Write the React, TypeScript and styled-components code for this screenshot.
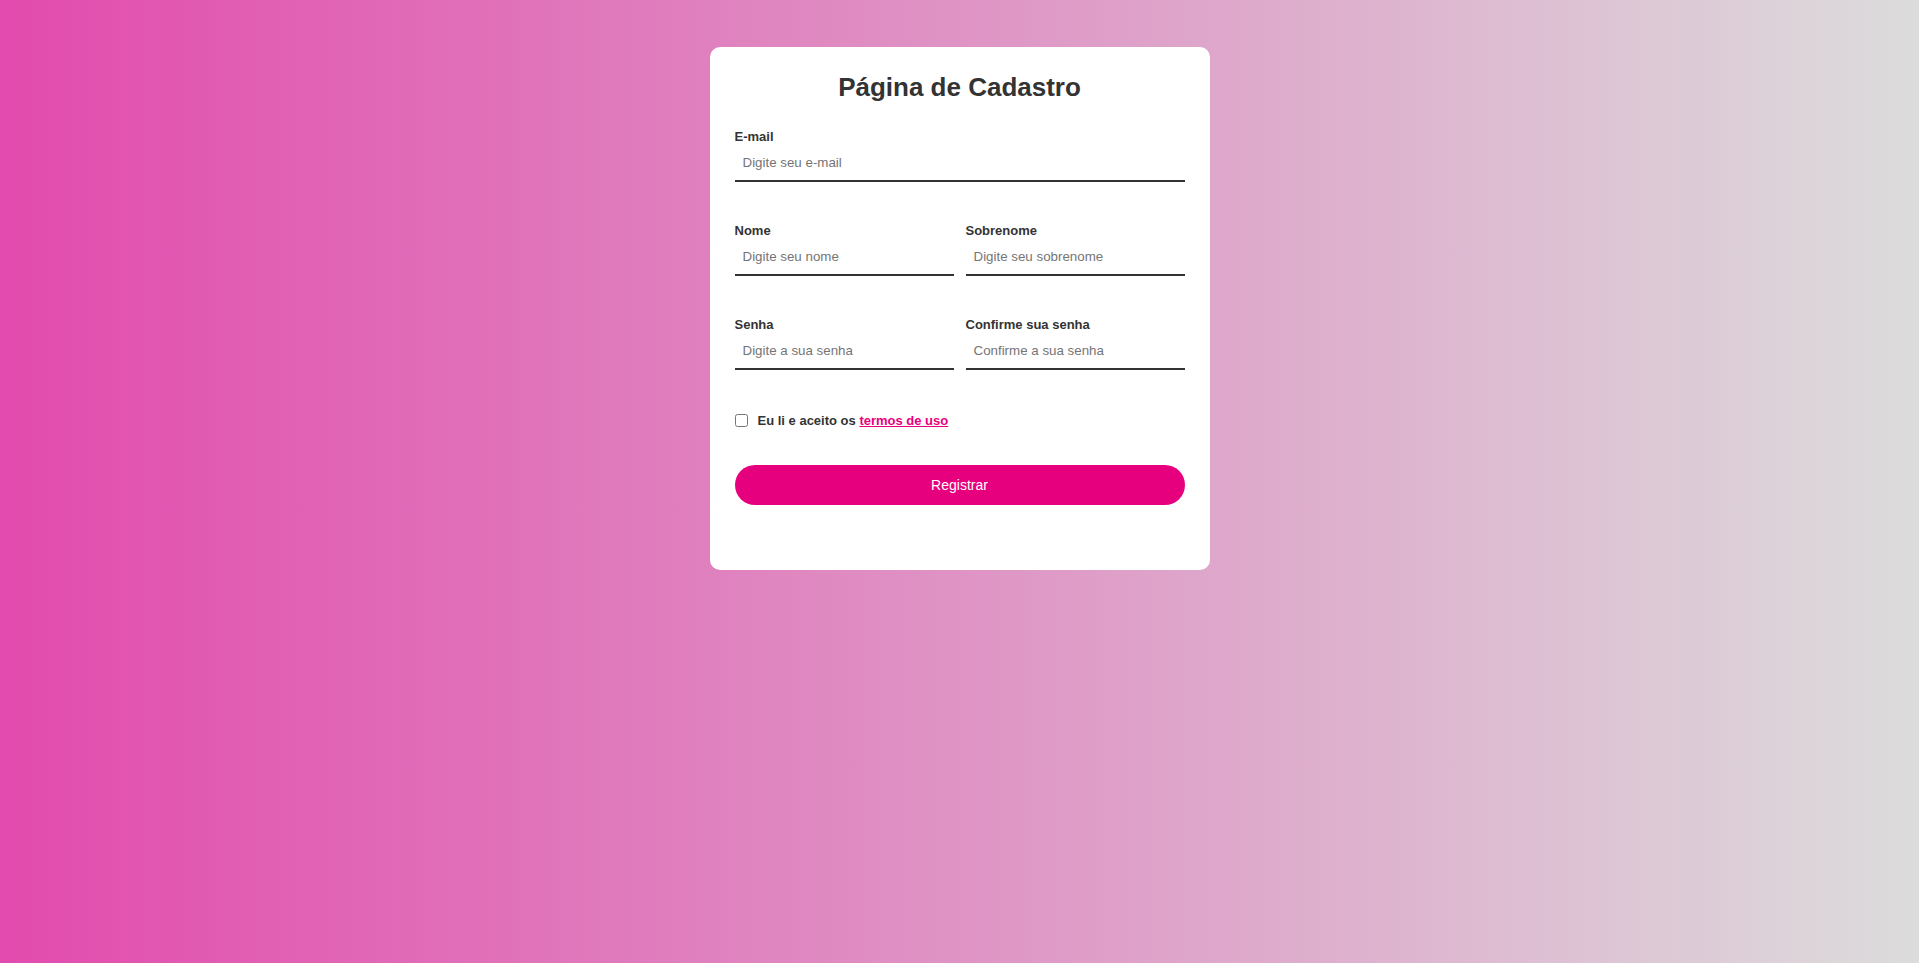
import React from "react";
import styled, { createGlobalStyle } from "styled-components";

const GlobalStyle = createGlobalStyle`
  * { box-sizing: border-box; }
  html, body { margin: 0; padding: 0; }
  body {
    font-family: "Liberation Sans", Arial, sans-serif;
    min-height: 100vh;
    background: linear-gradient(to right, #e24bad 0%, #dcdcdc 100%);
  }
`;

const Page = styled.main`
  min-height: 100vh;
  display: flex;
  justify-content: center;
  align-items: flex-start;
  padding-top: 47px;
`;

const Card = styled.form`
  width: 500px;
  background: #ffffff;
  border-radius: 10px;
  padding: 25px 25px 65px;
  display: flex;
  flex-direction: column;
`;

const Title = styled.h1`
  margin: 0 0 27px;
  text-align: center;
  font-size: 26px;
  line-height: 30px;
  font-weight: 700;
  color: #333333;
`;

const Fields = styled.div`
  display: flex;
  flex-direction: column;
  gap: 41px;
`;

const Row = styled.div<{ $cols: number }>`
  display: grid;
  grid-template-columns: repeat(${(p) => p.$cols}, 1fr);
  column-gap: 12px;
`;

const Field = styled.div`
  display: flex;
  flex-direction: column;
`;

const Label = styled.label`
  display: block;
  font-size: 13px;
  line-height: 15px;
  font-weight: 700;
  color: #333333;
  margin-bottom: 1px;
`;

const Input = styled.input`
  width: 100%;
  height: 37px;
  border: none;
  border-bottom: 2px solid #333333;
  padding: 0 8px 1px;
  font-family: "Liberation Sans", Arial, sans-serif;
  font-size: 13.333px;
  color: #333333;
  background: transparent;
  outline: none;
  &::placeholder {
    color: #757575;
  }
`;

const Terms = styled.div`
  display: flex;
  align-items: center;
  gap: 10px;
  margin: 2px 0 -4px;
  font-size: 13px;
  line-height: 15px;
  font-weight: 700;
  color: #333333;
`;

const Check = styled.input`
  margin: 0;
  width: 13px;
  height: 13px;
`;

const Link = styled.a`
  color: #e6007e;
  text-decoration: underline;
`;

const Button = styled.button`
  width: 100%;
  height: 40px;
  border: none;
  border-radius: 20px;
  background: #e6007e;
  color: #ffffff;
  font-family: "Liberation Sans", Arial, sans-serif;
  font-size: 14px;
  cursor: pointer;
`;

export default function App() {
  return (
    <>
      <GlobalStyle />
      <Page>
        <Card onSubmit={(e) => e.preventDefault()}>
          <Title>Página de Cadastro</Title>
          <Fields>
            <Row $cols={1}>
              <Field>
                <Label htmlFor="email">E-mail</Label>
                <Input id="email" type="email" placeholder="Digite seu e-mail" />
              </Field>
            </Row>
            <Row $cols={2}>
              <Field>
                <Label htmlFor="nome">Nome</Label>
                <Input id="nome" type="text" placeholder="Digite seu nome" />
              </Field>
              <Field>
                <Label htmlFor="sobrenome">Sobrenome</Label>
                <Input id="sobrenome" type="text" placeholder="Digite seu sobrenome" />
              </Field>
            </Row>
            <Row $cols={2}>
              <Field>
                <Label htmlFor="senha">Senha</Label>
                <Input id="senha" type="password" placeholder="Digite a sua senha" />
              </Field>
              <Field>
                <Label htmlFor="confirma">Confirme sua senha</Label>
                <Input id="confirma" type="password" placeholder="Confirme a sua senha" />
              </Field>
            </Row>
            <Terms>
              <Check type="checkbox" id="termos" />
              <span>
                Eu li e aceito os <Link href="#">termos de uso</Link>
              </span>
            </Terms>
            <Button type="submit">Registrar</Button>
          </Fields>
        </Card>
      </Page>
    </>
  );
}
